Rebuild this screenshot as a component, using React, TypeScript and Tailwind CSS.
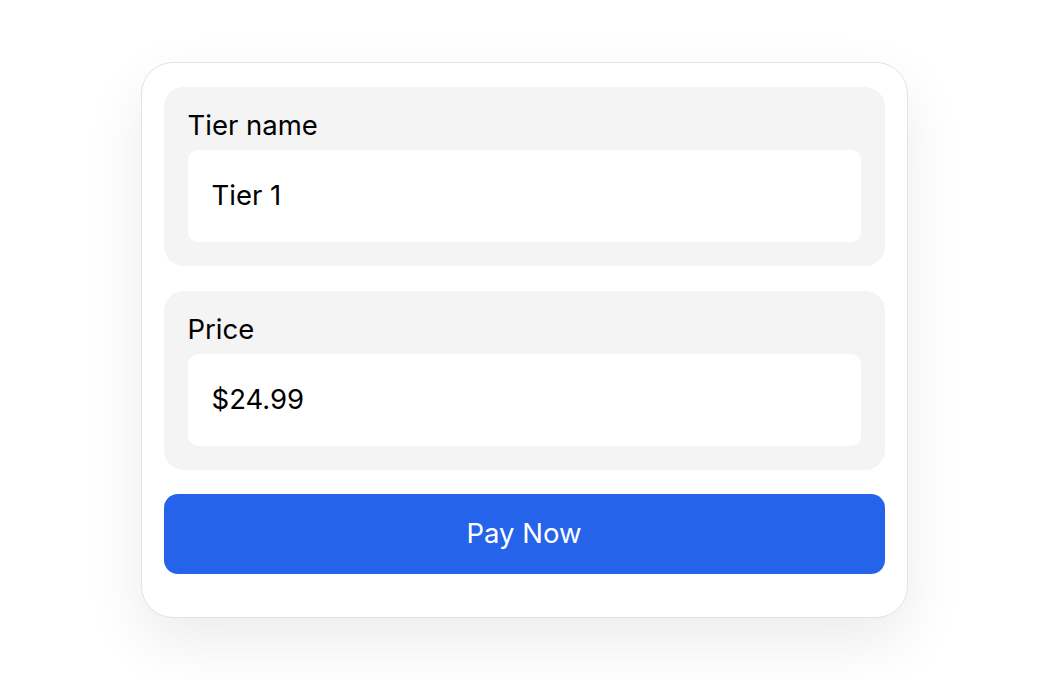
import React from 'react';

function Field({ label, value }: { label: string; value: string }) {
  return (
    <div className="rounded-[20px] bg-[#f4f4f4] px-6 pt-5 pb-6">
      <div className="text-[27.5px] leading-[36px] text-black mb-[7px]">{label}</div>
      <div className="h-[92px] rounded-[10px] bg-white px-6 flex items-center text-[27.5px] text-black">
        {value}
      </div>
    </div>
  );
}

export default function App() {
  return (
    <div
      className="w-full h-[680px] bg-white flex items-center justify-center"
      style={{ fontFamily: 'Inter, "Noto Sans", sans-serif' }}
    >
      <div className="w-[767px] h-[556px] rounded-[32px] border border-[#e3e3e3] bg-white px-[22px] pt-6 shadow-[0_24px_60px_rgba(0,0,0,0.08)] flex flex-col gap-[25px]">
        <Field label="Tier name" value="Tier 1" />
        <Field label="Price" value="$24.99" />
        <button className="-mt-px h-20 w-full rounded-[14px] bg-[#2563eb] text-white text-[27.5px]">
          Pay Now
        </button>
      </div>
    </div>
  );
}
